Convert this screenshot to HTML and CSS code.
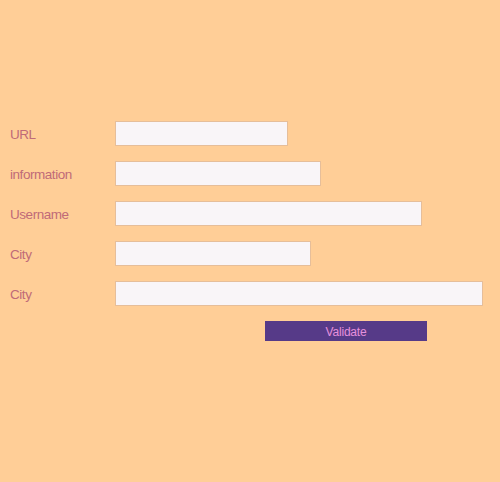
FILE: index.html
```html
<!DOCTYPE html>
<html>
<head>
<meta charset="utf-8">
<link rel="stylesheet" href="styles.css">
</head>
<body>
<form class="form">
  <div class="row"><label class="label">URL</label><input class="field w1" type="text"></div>
  <div class="row"><label class="label">information</label><input class="field w2" type="text"></div>
  <div class="row"><label class="label">Username</label><input class="field w3" type="text"></div>
  <div class="row"><label class="label">City</label><input class="field w4" type="text"></div>
  <div class="row"><label class="label">City</label><input class="field w5" type="text"></div>
  <div class="actions"><button class="btn" type="button">Validate</button></div>
</form>
</body>
</html>
```
FILE: styles.css
```css
html, body {
  margin: 0;
  padding: 0;
  background: #ffce97;
  height: 100%;
}
body {
  font-family: "Liberation Sans", Arial, sans-serif;
}
.form {
  padding: 121px 0 0 10px;
  display: flex;
  flex-direction: column;
  gap: 15px;
}
.row {
  display: flex;
  align-items: center;
  height: 25px;
}
.label {
  width: 105px;
  flex: none;
  padding-top: 2px;
  font-size: 13.5px;
  color: #c06a78;
  letter-spacing: -0.45px;
}
.field {
  box-sizing: border-box;
  height: 25px;
  margin: 0;
  padding: 0 4px;
  background: #f9f5f8;
  border: 1px solid #e6be9a;
  border-radius: 0;
  outline: none;
}
.w1 { width: 173px; }
.w2 { width: 206px; }
.w3 { width: 307px; }
.w4 { width: 196px; }
.w5 { width: 368px; }
.actions {
  padding-left: 255px;
}
.btn {
  width: 162px;
  height: 20px;
  margin: 0;
  padding: 2px 0 0;
  border: none;
  background: #563a88;
  color: #e590dc;
  font-family: "Liberation Sans", Arial, sans-serif;
  font-size: 12px;
  letter-spacing: -0.2px;
}
```
